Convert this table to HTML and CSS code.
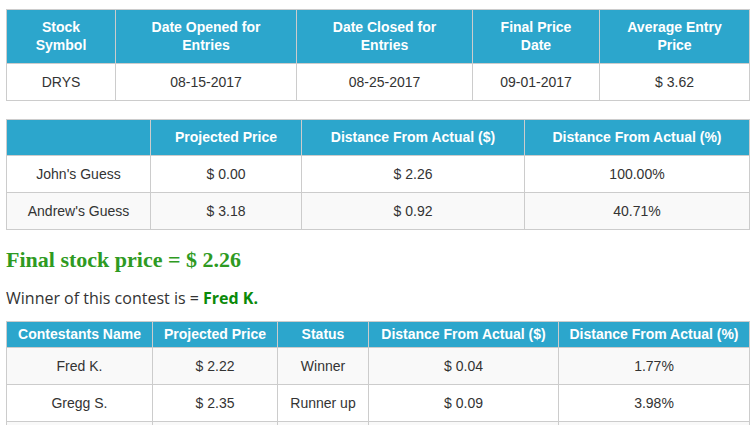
FILE: index.html
```html
<!DOCTYPE html>
<html lang="en">
<head>
    <meta charset="UTF-8">
    <meta name="viewport" content="width=device-width, initial-scale=1.0">
    <title>DRYS Contest</title>
    <link rel="stylesheet" href="styles.css">
</head>
<body>
    <div class="page">
        <table class="grid contest-info">
            <tbody>
                <tr>
                    <th>Stock<br>Symbol</th>
                    <th>Date Opened for<br>Entries</th>
                    <th>Date Closed for<br>Entries</th>
                    <th>Final Price<br>Date</th>
                    <th>Average Entry<br>Price</th>
                </tr>
                <tr>
                    <td>DRYS</td>
                    <td>08-15-2017</td>
                    <td>08-25-2017</td>
                    <td>09-01-2017</td>
                    <td>$ 3.62</td>
                </tr>
            </tbody>
        </table>

        <table class="grid striped guesses">
            <tbody>
                <tr>
                    <th></th>
                    <th>Projected Price</th>
                    <th>Distance From Actual ($)</th>
                    <th>Distance From Actual (%)</th>
                </tr>
                <tr>
                    <td>John's Guess</td>
                    <td>$ 0.00</td>
                    <td>$ 2.26</td>
                    <td>100.00%</td>
                </tr>
                <tr>
                    <td>Andrew's Guess</td>
                    <td>$ 3.18</td>
                    <td>$ 0.92</td>
                    <td>40.71%</td>
                </tr>
            </tbody>
        </table>

        <h2 class="final-price">Final stock price = $ 2.26</h2>
        <p class="winner">Winner of this contest is = <b>Fred K.</b></p>

        <table class="grid striped results">
            <thead>
                <tr>
                    <th>Contestants Name</th>
                    <th>Projected Price</th>
                    <th>Status</th>
                    <th>Distance From Actual ($)</th>
                    <th>Distance From Actual (%)</th>
                </tr>
            </thead>
            <tbody>
                <tr>
                    <td>Fred K.</td>
                    <td>$ 2.22</td>
                    <td>Winner</td>
                    <td>$ 0.04</td>
                    <td>1.77%</td>
                </tr>
                <tr>
                    <td>Gregg S.</td>
                    <td>$ 2.35</td>
                    <td>Runner up</td>
                    <td>$ 0.09</td>
                    <td>3.98%</td>
                </tr>
                <tr>
                    <td>Mike T.</td>
                    <td>$ 2.41</td>
                    <td>-</td>
                    <td>$ 0.15</td>
                    <td>6.64%</td>
                </tr>
            </tbody>
        </table>
    </div>
</body>
</html>
```

FILE: styles.css
```css
body {
    margin: 0;
    background-color: #fff;
    color: #333;
    font-family: "Liberation Sans", Arial, sans-serif;
    font-size: 14px;
}
.page {
    padding: 9px 6px;
}
.grid {
    width: 100%;
    border-collapse: collapse;
    table-layout: fixed;
    margin-bottom: 18px;
    border: 1px solid #ccc;
}
.grid th,
.grid td {
    box-sizing: border-box;
    border: 1px solid #ccc;
    text-align: center;
    line-height: 18px;
    padding: 9px 4px;
}
.grid th {
    background-color: #2ca6cc;
    color: #fff;
    font-weight: bold;
    padding: 8px 4px 9px;
}
.striped tr:nth-child(odd) td {
    background-color: #f9f9f9;
}
.contest-info th:nth-child(1) { width: 109px; }
.contest-info th:nth-child(2) { width: 181px; }
.contest-info th:nth-child(3) { width: 176px; }
.contest-info th:nth-child(4) { width: 127px; }

.guesses {
    margin-bottom: 15px;
}
.guesses th:nth-child(1) { width: 144px; }
.guesses th:nth-child(2) { width: 151px; }
.guesses th:nth-child(3) { width: 223px; }

.results {
    margin-bottom: 0;
}
.results th {
    padding: 3px 4px 4px;
}
.results th:nth-child(1) { width: 146px; }
.results th:nth-child(2) { width: 125px; }
.results th:nth-child(3) { width: 91px; }
.results th:nth-child(4) { width: 190px; }

.final-price {
    margin: 0;
    font-family: "Liberation Serif", "Times New Roman", serif;
    font-size: 22px;
    line-height: 30px;
    font-weight: bold;
    color: #2e9a22;
}
.winner {
    margin: 12px 0 12px;
    font-family: "Open Sans", sans-serif;
    font-size: 16px;
    line-height: 22px;
}
.winner b {
    color: #0a8a0a;
}
```
